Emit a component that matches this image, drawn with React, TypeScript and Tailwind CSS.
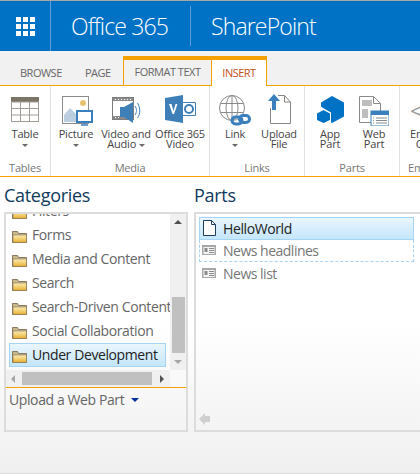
import { ReactNode } from "react";

const font = { fontFamily: "'Open Sans', 'Noto Sans', sans-serif" };

function Caret({ className = "" }: { className?: string }) {
  return <span className={`inline-block w-0 h-0 border-x-[3px] border-x-transparent border-t-[3px] border-t-[#6a6a6a] ${className}`} />;
}

function TableIcon() {
  return (
    <svg width="28" height="25" viewBox="0 0 28 25">
      <rect x="0" y="0" width="28" height="5" fill="#7d7468" />
      <rect x="0.5" y="5" width="27" height="19.5" fill="#fff" stroke="#a19c96" />
      <path d="M0 11.500h28M0 18h28M9.500 5v20M18.500 5v20" stroke="#a19c96" />
    </svg>
  );
}

function PictureIcon() {
  return (
    <svg width="31" height="30" viewBox="0 0 31 30">
      <rect x="0.5" y="0.5" width="26" height="27" fill="#fff" stroke="#8c8c8c" />
      <circle cx="21" cy="7" r="3" fill="#e8c26e" />
      <path d="M2 26v-7l6-7 7 7v7z" fill="#bccfe0" />
      <rect x="15" y="15" width="15" height="11" fill="#fff" stroke="#3b80bd" strokeWidth="2" />
      <path d="M22.500 26v2M19 29h7" stroke="#3b80bd" strokeWidth="1.500" />
    </svg>
  );
}

function VideoIcon() {
  return (
    <svg width="29" height="27" viewBox="0 0 29 27">
      <rect x="0.5" y="0.5" width="21" height="22" fill="#fff" stroke="#7d7d7d" />
      <path d="M1 1h20v3H1zM1 19h20v3H1z" fill="#8c8c8c" />
      <path d="M3 2.500h1M6 2.500h1M9 2.500h1M12 2.500h1M15 2.500h1M18 2.500h1M3 20.500h1M6 20.500h1" stroke="#fff" />
      <path d="M8 10h4l9-5v21l-9-6H8z" fill="#3f7fb8" />
      <path d="M23 9c2 3 2 6 0 9M25.500 6c3 5 3 11 0 15" fill="none" stroke="#3f7fb8" />
    </svg>
  );
}

function StreamIcon() {
  return (
    <svg width="31" height="28" viewBox="0 0 31 28">
      <path d="M15 7.500h15.500v13H15z" fill="#fff" stroke="#3f7fb8" />
      <circle cx="24" cy="14" r="4" fill="none" stroke="#3f7fb8" strokeWidth="2" />
      <path d="M0 3l18-3v28L0 25z" fill="#3f7fb8" />
      <path d="M4 9l3.500 10h1.500L12.500 9h-2l-2 7-2-7z" fill="#fff" />
    </svg>
  );
}

function GlobeIcon() {
  return (
    <svg width="32" height="31" viewBox="0 0 32 31">
      <g fill="none" stroke="#8a8a8a">
        <circle cx="13" cy="13" r="12.500" />
        <ellipse cx="13" cy="13" rx="6" ry="12.500" />
        <path d="M13 0v26M1.500 8.500h23M1.500 17.500h23" />
      </g>
      <g fill="none" stroke="#3b80bd" strokeWidth="3">
        <rect x="13" y="22" width="10" height="7" rx="3.500" />
        <rect x="20.500" y="20.500" width="10" height="7" rx="3.500" />
      </g>
    </svg>
  );
}

function UploadIcon() {
  return (
    <svg width="23" height="30" viewBox="0 0 23 30">
      <path d="M2.500 14V29.500h20V8l-6-6.500H10" fill="#fff" stroke="#8a8580" />
      <path d="M16.500 1.500V8h6" fill="none" stroke="#8a8580" />
      <path d="M6 0l6 7H8v9H4V7H0z" fill="#3b80bd" />
    </svg>
  );
}

function AppPartIcon() {
  return (
    <svg width="27" height="27" viewBox="0 0 27 27">
      <path d="M15 0l12 6.500v14L15 27l-1-.5v-10L6 12l-2-1.500v-4z" fill="#0072c6" />
      <path d="M6.500 14l6.500 3.500V24l-6.500 3L0 24v-6.500z" fill="#0072c6" />
    </svg>
  );
}

function WebPartIcon() {
  return (
    <svg width="30" height="30" viewBox="0 0 30 30">
      <path d="M.5.5h14l7 7v19H.5z" fill="#fff" stroke="#8a8a8a" />
      <path d="M14.500.5v7h7" fill="none" stroke="#8a8a8a" />
      <rect x="3" y="4" width="10" height="6" fill="#bdbdbd" />
      <rect x="3" y="13" width="6" height="9" fill="#bdbdbd" />
      <rect x="12" y="15" width="18" height="15" fill="#fff" stroke="#3b80bd" />
      <rect x="12" y="15" width="18" height="4" fill="#3b80bd" />
      <path d="M14 22h1M17 22h11M14 24.500h1M17 24.500h11M14 27h1M17 27h11" stroke="#8a8a8a" />
    </svg>
  );
}

function FolderIcon() {
  return (
    <svg width="15" height="13" viewBox="0 0 15 13" className="shrink-0 mt-[5px]">
      <defs>
        <linearGradient id="folder" x1="0" y1="0" x2="0" y2="1">
          <stop offset="0" stopColor="#fdf0b8" />
          <stop offset="1" stopColor="#e8ae2e" />
        </linearGradient>
      </defs>
      <path d="M.5 12.500V1.500h5l1 2h8v9z" fill="#c9b98a" stroke="#8a7a5e" />
      <path d="M1 12.500V5h13.500v7.500z" fill="url(#folder)" stroke="#8a7a5e" strokeWidth="0.7" />
    </svg>
  );
}

function PageIcon() {
  return (
    <svg width="13" height="16" viewBox="0 0 13 16" className="shrink-0">
      <path d="M.5.5h8l4 4v11H.5z" fill="#fff" stroke="#1e3e5c" />
      <path d="M8.500.5v4h4" fill="none" stroke="#1e3e5c" />
    </svg>
  );
}

function NewsIcon() {
  return (
    <svg width="14" height="11" viewBox="0 0 14 11" className="shrink-0">
      <rect x="0" y="0" width="14" height="10" fill="#a8a8a8" />
      <rect x="1.500" y="2" width="11" height="7" fill="#f4f4f4" />
      <rect x="2.500" y="3" width="3" height="4" fill="#8a8a8a" />
      <path d="M7 3.500h5M7 5.500h5M7 7.500h5" stroke="#8a8a8a" />
    </svg>
  );
}

function RibbonButton({ icon, label, caret, width }: { icon: ReactNode; label: ReactNode; caret?: boolean; width: string }) {
  return (
    <div className={`${width} flex flex-col items-center shrink-0`}>
      <div className="h-[32px] flex items-end justify-center">{icon}</div>
      <div className="mt-[3px] text-[11px] leading-[10px] text-[#444] text-center tracking-[-0.2px] whitespace-nowrap">{label}</div>
      {caret && <Caret className="mt-[5px]" />}
    </div>
  );
}

function Group({ title, width, children, last }: { title: string; width: string; children: ReactNode; last?: boolean }) {
  return (
    <div className={`${width} shrink-0 flex flex-col ${last ? "" : "border-r border-[#e1e1e1]"}`}>
      <div className="flex flex-1 pt-[8px]">{children}</div>
      <div className={`h-[20px] pt-[6px] text-[11px] leading-[12px] text-[#777] tracking-[-0.2px] whitespace-nowrap ${last ? "pl-[8px]" : "text-center"}`}>{title}</div>
    </div>
  );
}

const categories = ["Filters", "Forms", "Media and Content", "Search", "Search-Driven Content", "Social Collaboration"];

export default function App() {
  return (
    <div className="w-[420px] h-[474px] overflow-hidden bg-white flex flex-col border-t border-[#a6a6a6]" style={font}>
      <header className="h-[50px] bg-[#0072c6] flex items-center text-white shrink-0">
        <div className="w-[51px] self-stretch border-r border-[#5a9fd8] flex items-center justify-center">
          <div className="grid grid-cols-3 gap-[2px]">
            {Array.from({ length: 9 }).map((_, i) => (
              <span key={i} className="w-[5px] h-[5px] bg-white" />
            ))}
          </div>
        </div>
        <div className="pl-[20px] w-[139px] text-[23px] font-light tracking-[-0.85px]">Office 365</div>
        <div className="w-px h-[40px] bg-[#5a9fd8]" />
        <div className="pl-[20px] text-[23px] font-light tracking-[-0.85px]">SharePoint</div>
      </header>

      <div className="h-[35px] bg-[#f1f1f1] flex items-end border-b border-[#f5a100] shrink-0 text-[11px] text-[#666] tracking-[-0.5px]">
        <div className="w-[85px] pl-[20px] pb-[4px]">BROWSE</div>
        <div className="w-[38px] pb-[4px]">PAGE</div>
        <div className="w-[89px] h-[29px] border-x border-t-4 border-[#f5a100] flex items-center justify-center">FORMAT TEXT</div>
        <div className="w-[55px] h-[30px] -mb-px bg-white border-r border-t-4 border-[#f5a100] flex items-center justify-center text-[#c2501a]">INSERT</div>
      </div>

      <div className="h-[91px] flex border-b border-[#f5a100] shrink-0 overflow-hidden">
        <Group title="Tables" width="w-[51px]">
          <RibbonButton icon={<span className="block mb-[4px]"><TableIcon /></span>} label="Table" caret width="w-[50px]" />
        </Group>
        <Group title="Media" width="w-[159px]">
          <RibbonButton icon={<span className="block ml-[3px]"><PictureIcon /></span>} label="Picture" caret width="w-[50px]" />
          <RibbonButton icon={<span className="block mb-[2px]"><VideoIcon /></span>} label={<>Video and<br />Audio <Caret className="align-middle" /></>} width="w-[50px]" />
          <RibbonButton icon={<span className="block mb-[3px]"><StreamIcon /></span>} label={<>Office 365<br />Video</>} width="w-[58px]" />
        </Group>
        <Group title="Links" width="w-[95px]">
          <RibbonButton icon={<GlobeIcon />} label="Link" caret width="w-[50px]" />
          <RibbonButton icon={<span className="block mb-[2px]"><UploadIcon /></span>} label={<>Upload<br />File</>} width="w-[38px]" />
        </Group>
        <Group title="Parts" width="w-[95px]">
          <RibbonButton icon={<span className="block mb-[3px]"><AppPartIcon /></span>} label={<>App<br />Part</>} width="w-[50px]" />
          <RibbonButton icon={<WebPartIcon />} label={<>Web<br />Part</>} width="w-[38px]" />
        </Group>
        <Group title="Em" width="w-[21px]" last>
          <div className="pl-[10px] w-full">
            <div className="h-[32px] flex items-center text-[#999] text-[22px] leading-none">&lt;</div>
            <div className="mt-[3px] text-[11px] leading-[10px] text-[#444] whitespace-nowrap">Em<br />&nbsp;&nbsp;C</div>
          </div>
        </Group>
      </div>

      <div className="flex-1 bg-gradient-to-b from-white via-white to-[#efefef] flex flex-col min-h-0">
        <div className="flex pl-[4px] pt-[6px]">
          <div className="w-[184px] shrink-0 flex flex-col">
            <h2 className="text-[18px] leading-[24px] text-[#0f3a5c] tracking-[-0.3px]">Categories</h2>
            <div className="mt-[5px] h-[220px] border-2 border-[#dcdcdc] flex flex-col">
              <div className="flex h-[156px] shrink-0">
                <div className="flex-1 overflow-hidden">
                  <div className="-mt-[15px] pl-[3px]">
                    {categories.map((c) => (
                      <div key={c} className="h-[24px] pb-[2px] flex items-center gap-[5px] pl-[3px] text-[14px] text-[#666] whitespace-nowrap tracking-[-0.4px]">
                        <FolderIcon />
                        {c}
                      </div>
                    ))}
                    <div className="h-[24px] pb-[2px] w-[157px] flex items-center gap-[5px] pl-[2px] text-[14px] text-[#222] whitespace-nowrap tracking-[-0.4px] border border-[#a6d4f5] bg-gradient-to-b from-[#eaf6fe] to-[#c4e6fb]">
                      <FolderIcon />
                      Under Development
                    </div>
                  </div>
                </div>
                <div className="w-[16px] bg-[#f0f0f0] flex flex-col items-center shrink-0">
                  <span className="mt-[6px] w-0 h-0 border-x-[4px] border-x-transparent border-b-[4px] border-b-[#505050]" />
                  <div className="mt-[73px] w-[13px] h-[56px] bg-[#c0c0c0]" />
                  <span className="mt-[7px] w-0 h-0 border-x-[4px] border-x-transparent border-t-[4px] border-t-[#a6a6a6]" />
                </div>
              </div>
              <div className="h-[17px] flex bg-[#f0f0f0] items-center mr-[16px] shrink-0">
                <span className="ml-[5px] w-0 h-0 border-y-[4px] border-y-transparent border-r-[4px] border-r-[#a6a6a6]" />
                <div className="ml-[7px] w-[130px] h-[13px] bg-[#c0c0c0]" />
                <span className="ml-[8px] w-0 h-0 border-y-[4px] border-y-transparent border-l-[4px] border-l-[#505050]" />
              </div>
              <div className="h-px bg-[#f5a100] shrink-0" />
              <div className="pl-[3px] pt-[2px] text-[14px] leading-[20px] text-[#666] tracking-[-0.4px] flex items-center gap-[7px]">
                Upload a Web Part
                <span className="w-0 h-0 border-x-[4px] border-x-transparent border-t-[4px] border-t-[#00339a]" />
              </div>
            </div>
          </div>
          <div className="ml-[6px] flex-1 flex flex-col">
            <h2 className="text-[18px] leading-[24px] text-[#0f3a5c] tracking-[-0.3px]">Parts</h2>
            <div className="mt-[5px] h-[220px] border-l-2 border-t-2 border-b-2 border-[#dcdcdc] flex flex-col pl-[3px] pr-[6px] pt-[3px]">
              <div className="h-[23px] pb-[1px] flex items-center gap-[7px] pl-[3px] text-[14px] text-[#222] tracking-[-0.4px] border border-[#a6d4f5] bg-gradient-to-b from-[#eaf6fe] to-[#c4e6fb]">
                <PageIcon />
                HelloWorld
              </div>
              <div className="h-[22px] flex items-center gap-[7px] pl-[2px] text-[14px] text-[#777] tracking-[-0.5px] border-x border-b border-dashed border-[#a6d4f5]">
                <NewsIcon />
                News headlines
              </div>
              <div className="h-[23px] flex items-center gap-[7px] pl-[3px] text-[14px] text-[#777] tracking-[-0.5px]">
                <NewsIcon />
                News list
              </div>
              <div className="mt-auto mb-[5px]">
                <svg width="12" height="12" viewBox="0 0 12 12"><path d="M0 6l6-6v3h5v6H6v3z" fill="#cfcfcf" /></svg>
              </div>
            </div>
          </div>
        </div>
        <div className="mt-auto h-px bg-[#dcdcdc]" />
      </div>
    </div>
  );
}
